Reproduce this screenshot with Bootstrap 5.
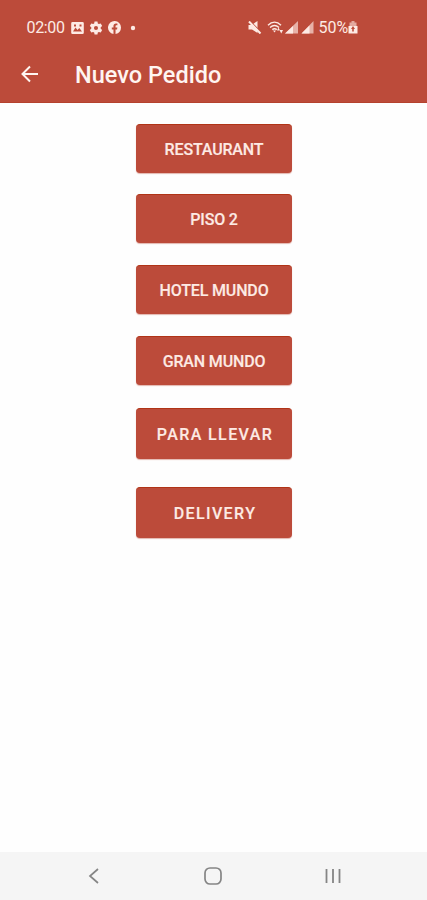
<!DOCTYPE html>
<html lang="es">
<head>
<meta charset="utf-8">
<meta name="viewport" content="width=device-width, initial-scale=1">
<title>Nuevo Pedido</title>
<link href="https://cdn.jsdelivr.net/npm/bootstrap@5.3.0/dist/css/bootstrap.min.css" rel="stylesheet">
<style>
:root { --brick: #bc4b3a; --cream: #fdeae4; }
body { font-family: Roboto, "Liberation Sans", sans-serif; background: #fefefe; height: 900px; overflow: hidden; }
svg { display: block; flex: none; }
.app-top { background: var(--brick); height: 102.5px; border-bottom: 1px solid #b5422e; color: var(--cream); }
.status { height: 46px; padding: 9px 69px 0 26px; font-size: 16px; line-height: 1; letter-spacing: -.25px; }
.clock { width: 45px; padding-left: .5px; letter-spacing: -.35px; }
.title-bar { height: 56px; padding-left: 20px; }
.title-text { font-size: 23.5px; font-weight: 500; line-height: 1; margin-left: 35px; padding-top: 3px; letter-spacing: .02px; color: #fff5f1; }
.back { color: #fff5f1; }
.wifi { margin-left: 5px; }
.sim { margin-left: 2px; }
.percent { margin-left: 3px; letter-spacing: -.1px; }
.options { padding-top: 21.5px; }
.btn-order { --bs-btn-color: var(--cream); --bs-btn-bg: var(--brick); --bs-btn-border-color: var(--brick); --bs-btn-hover-bg: #a94030; --bs-btn-hover-color: #fff;
  width: 156px; height: 49px; margin-bottom: 21.7px; padding: 2px 0 0 1px; border: 0; border-top: 1px solid #b03417; border-radius: 4px; font-size: 16px; font-weight: 500; line-height: 1; letter-spacing: -.15px; -webkit-text-stroke: .15px currentColor; box-shadow: 0 1px 1px rgba(188,75,58,.4); }
.btn-order.higher { margin-top: -.6px; margin-bottom: 22.3px; }
.btn-order.tall { height: 51px; margin-bottom: 28px; padding-left: 3px; letter-spacing: 1.4px; }
.btn-order.first-tall { margin-top: .8px; }
.nav-keys { height: 48px; background: #f5f5f5; color: #858585; padding: 0 86px 0 88px; }
</style>
</head>
<body class="d-flex flex-column">
<header class="app-top flex-shrink-0">
  <div class="status d-flex align-items-center">
    <span class="clock">02:00</span>
    <svg width="13" height="12" viewBox="0 0 13 12"><path fill="currentColor" fill-rule="evenodd" d="M1.500 0h10a1.300 1.300 0 0 1 1.300 1.300v9.400a1.300 1.300 0 0 1-1.300 1.300h-10a1.300 1.300 0 0 1-1.300-1.300V1.300A1.300 1.300 0 0 1 1.500 0zM2 9.500h9L8.300 6 6.500 8 4.500 5.500zM3 2.500v2h2v-2zM8.500 2.500v2h2v-2z"/></svg>
    <svg class="ms-1" width="16" height="14" viewBox="0 0 24 24"><path fill="currentColor" fill-rule="evenodd" d="M9.500 1h5l.6 3.200 1.900 1.100 3.100-1.100 2.500 4.300-2.500 2.200v2.600l2.500 2.200-2.500 4.300-3.100-1.100-1.900 1.100-.6 3.200h-5l-.6-3.200L7 18.700l-3.100 1.100-2.500-4.300 2.500-2.200v-2.600L1.400 8.500l2.500-4.300L7 5.300l1.900-1.100zM12 8.500a3.500 3.500 0 1 0 0 7 3.500 3.500 0 0 0 0-7z"/></svg>
    <svg class="ms-1" width="13" height="13" viewBox="0 0 24 24"><path fill="currentColor" d="M24 12A12 12 0 1 0 10.100 23.900v-8.400H7V12h3.100V9.400c0-3 1.800-4.700 4.600-4.700 1.300 0 2.700.2 2.700.2v3h-1.500c-1.500 0-2 .9-2 1.900V12h3.400l-.6 3.500h-2.800v8.400A12 12 0 0 0 24 12z"/></svg>
    <svg width="24" height="6" viewBox="0 0 24 6"><circle cx="12" cy="3" r="2.200" fill="currentColor"/></svg>
    <div class="d-flex align-items-center ms-auto">
      <svg width="14" height="13" viewBox="0 0 14 13"><path fill="currentColor" d="M.5 4h3L9.500 0v12L4 8.500H.5z"/><path d="M2 0l12 12" stroke="#bc4b3a" stroke-width="1.200"/><path d="M1 .5l11.500 12" stroke="currentColor" stroke-width="2"/></svg>
      <svg class="wifi" width="17" height="13" viewBox="0 0 17 13" fill="none" stroke="currentColor"><path stroke-width="1.400" d="M1 4.200c4-4 9-4 13 0M3 6.500c3-2.600 6-2.600 9 0M5.300 8.600c1.500-1.200 3-1.200 4.500 0"/><path fill="currentColor" stroke="none" d="M6 9.500h3l-1.500 2zM10 9.500h3l-1.500-3zM12.500 9h3.500l-1.750 3.500z"/></svg>
      <svg width="15" height="13" viewBox="0 0 15 13" fill="currentColor"><path opacity=".65" d="M14 0v12.500H1z"/><path d="M9 5v7.500H1z"/></svg>
      <svg class="sim" width="15" height="13" viewBox="0 0 15 13" fill="currentColor"><path opacity=".65" d="M12.500 0v12.500h-12z"/><path d="M8.500 4.500v8h-8z"/></svg>
      <span class="percent">50%</span>
      <svg width="10" height="13" viewBox="0 0 10 13"><path fill="currentColor" opacity=".6" d="M3.500 0h3v1.500h2V6h-7V1.500h2z"/><path fill="currentColor" d="M.5 5h9v7.500h-9z"/><path fill="#bc4b3a" d="M5 5l2 3H5.800v2.500H4.200V8H3z"/></svg>
    </div>
  </div>
  <div class="title-bar d-flex align-items-center">
    <svg class="back" width="20" height="20" viewBox="0 0 20 20" fill="none" stroke="currentColor" stroke-width="2"><path d="M18 10H3M10 2.500L2.500 10l7.500 7.500"/></svg>
    <h1 class="title-text mb-0">Nuevo Pedido</h1>
  </div>
</header>
<main class="options d-flex flex-column align-items-center flex-grow-1">
  <button class="btn btn-order" type="button">RESTAURANT</button>
  <button class="btn btn-order higher" type="button">PISO 2</button>
  <button class="btn btn-order" type="button">HOTEL MUNDO</button>
  <button class="btn btn-order" type="button">GRAN MUNDO</button>
  <button class="btn btn-order tall first-tall" type="button">PARA LLEVAR</button>
  <button class="btn btn-order tall" type="button">DELIVERY</button>
</main>
<nav class="nav-keys d-flex align-items-center justify-content-between flex-shrink-0">
  <svg width="12" height="16" viewBox="0 0 12 16" fill="none" stroke="currentColor" stroke-width="1.700"><path d="M10 1L2 8l8 7"/></svg>
  <svg width="18" height="18" viewBox="0 0 18 18" fill="none" stroke="currentColor" stroke-width="1.700"><rect x="1" y="1" width="16" height="16" rx="5"/></svg>
  <svg width="16" height="16" viewBox="0 0 16 16" stroke="currentColor" stroke-width="1.800"><path d="M1.500 1v14M8 1v14M14.500 1v14"/></svg>
</nav>
<script src="https://cdn.jsdelivr.net/npm/bootstrap@5.3.0/dist/js/bootstrap.bundle.min.js"></script>
</body>
</html>
